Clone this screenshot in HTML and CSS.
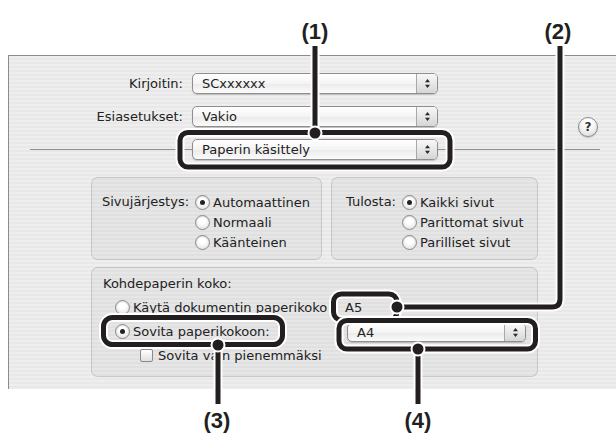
FILE: index.html
```html
<!DOCTYPE html>
<html lang="fi">
<head>
    <meta charset="UTF-8">
    <title>Paperin käsittely</title>
    <link rel="stylesheet" href="styles.css">
</head>
<body>
    <div class="page">
        <div class="dialog">
            <div class="top-rows">
                <span class="row-label">Kirjoitin:</span>
                <div class="popup popup-row">
                    <span class="popup-text">SCxxxxxx</span>
                    <span class="stepper"><svg width="7" height="11" viewBox="0 0 7 11"><path d="M1 4.2 3.5 1 6 4.2Z M1 6.8 3.5 10 6 6.8Z" fill="#2a2a2a"/></svg></span>
                </div>
                <span class="row-label">Esiasetukset:</span>
                <div class="popup popup-row">
                    <span class="popup-text">Vakio</span>
                    <span class="stepper"><svg width="7" height="11" viewBox="0 0 7 11"><path d="M1 4.2 3.5 1 6 4.2Z M1 6.8 3.5 10 6 6.8Z" fill="#2a2a2a"/></svg></span>
                </div>
                <span class="help">?</span>
            </div>

            <div class="divider">
                <div class="popup popup-panel">
                    <span class="popup-text">Paperin käsittely</span>
                    <span class="stepper"><svg width="7" height="11" viewBox="0 0 7 11"><path d="M1 4.2 3.5 1 6 4.2Z M1 6.8 3.5 10 6 6.8Z" fill="#2a2a2a"/></svg></span>
                </div>
            </div>

            <div class="groups">
                <div class="group group-choice group-order">
                    <span class="group-label">Sivujärjestys:</span>
                    <div class="radio-list">
                        <div class="option"><span class="radio on"></span>Automaattinen</div>
                        <div class="option"><span class="radio"></span>Normaali</div>
                        <div class="option"><span class="radio"></span>Käänteinen</div>
                    </div>
                </div>

                <div class="group group-choice group-print">
                    <span class="group-label">Tulosta:</span>
                    <div class="radio-list">
                        <div class="option"><span class="radio on"></span>Kaikki sivut</div>
                        <div class="option"><span class="radio"></span>Parittomat sivut</div>
                        <div class="option"><span class="radio"></span>Parilliset sivut</div>
                    </div>
                </div>

                <div class="group group-size">
                    <span class="size-title">Kohdepaperin koko:</span>
                    <div class="option indent"><span class="radio"></span>Käytä dokumentin paperikoko</div>
                    <span class="value-field">A5</span>
                    <div class="option indent"><span class="radio on"></span>Sovita paperikokoon:</div>
                    <div class="popup popup-small">
                        <span class="popup-text">A4</span>
                        <span class="stepper"><svg width="7" height="11" viewBox="0 0 7 11"><path d="M1 4.2 3.5 1 6 4.2Z M1 6.8 3.5 10 6 6.8Z" fill="#2a2a2a"/></svg></span>
                    </div>
                    <div class="option check-option"><span class="checkbox"></span>Sovita vain pienemmäksi</div>
                </div>
            </div>
        </div>

        <!-- callout lines drawn over the dialog -->
        <svg class="callouts" width="616" height="441" viewBox="0 0 616 441">
            <g fill="none">
                <path d="M315 46V133" stroke="#fff" stroke-width="9"/>
                <rect x="180" y="132.5" width="270" height="34.5" rx="8" stroke="#fff" stroke-width="9"/>
                <rect x="180" y="132.5" width="270" height="34.5" rx="8" stroke="#231f20" stroke-width="5"/>
                <path d="M315 46V133" stroke="#231f20" stroke-width="5"/>
            </g>
            <circle cx="315" cy="133" r="6.5" fill="#231f20" stroke="#fff" stroke-width="2"/>

            <g fill="none">
                <path d="M560 46V299Q560 307 552 307H397" stroke="#fff" stroke-width="9"/>
                <rect x="333.5" y="294" width="63.5" height="26" rx="8" stroke="#fff" stroke-width="9"/>
                <rect x="333.5" y="294" width="63.5" height="26" rx="8" stroke="#231f20" stroke-width="5"/>
                <path d="M560 46V299Q560 307 552 307H397" stroke="#231f20" stroke-width="5"/>
            </g>
            <circle cx="397" cy="307" r="6.5" fill="#231f20" stroke="#fff" stroke-width="2"/>

            <g fill="none">
                <rect x="103.5" y="317.5" width="179" height="27" rx="9" stroke="#fff" stroke-width="9"/>
                <path d="M218 345V404" stroke="#fff" stroke-width="9"/>
                <rect x="103.5" y="317.5" width="179" height="27" rx="9" stroke="#231f20" stroke-width="5"/>
                <path d="M218 345V404" stroke="#231f20" stroke-width="5"/>
            </g>
            <circle cx="218" cy="345" r="6.5" fill="#231f20" stroke="#fff" stroke-width="2"/>

            <g fill="none">
                <rect x="339" y="320.5" width="196.5" height="28.5" rx="8" stroke="#fff" stroke-width="9"/>
                <path d="M418 349V404" stroke="#fff" stroke-width="9"/>
                <rect x="339" y="320.5" width="196.5" height="28.5" rx="8" stroke="#231f20" stroke-width="5"/>
                <path d="M418 349V404" stroke="#231f20" stroke-width="5"/>
            </g>
            <circle cx="418" cy="349" r="6.5" fill="#231f20" stroke="#fff" stroke-width="2"/>
        </svg>

        <span class="callout-num num-1">(1)</span>
        <span class="callout-num num-2">(2)</span>
        <span class="callout-num num-3">(3)</span>
        <span class="callout-num num-4">(4)</span>
    </div>
</body>
</html>
```

FILE: styles.css
```css
* {
    box-sizing: border-box;
}
body {
    margin: 0;
    background: #ffffff;
    font-family: "DejaVu Sans", "Liberation Sans", sans-serif;
    font-size: 13px;
    color: #222;
}
.page {
    position: relative;
    width: 616px;
    height: 441px;
    padding-top: 55px;
    overflow: hidden;
}
.dialog {
    margin-left: 8px;
    height: 334px;
    border-top: 1px solid #8c8c8c;
    border-left: 1px solid #8c8c8c;
    background: repeating-linear-gradient(#eeeeee 0 2px, #e8e8e8 2px 4px);
}
.top-rows {
    display: grid;
    grid-template-columns: 174px 246px 1fr;
    column-gap: 9px;
    row-gap: 12px;
    padding-top: 17px;
    align-items: center;
}
.row-label {
    grid-column: 1;
    text-align: right;
    white-space: nowrap;
}
.popup-row {
    grid-column: 2;
}
.popup {
    display: flex;
    align-items: center;
    height: 21px;
    border: 1px solid #8e8e8e;
    border-radius: 5px;
    background: linear-gradient(#ffffff, #f4f4f4 50%, #eaeaea 51%, #fbfbfb);
    box-shadow: 0 1px 1px rgba(0, 0, 0, 0.18);
    overflow: hidden;
}
.popup-text {
    flex: 1;
    padding-left: 9px;
    white-space: nowrap;
}
.stepper {
    display: flex;
    align-items: center;
    justify-content: center;
    width: 21px;
    height: 100%;
    border-left: 1px solid #a8a8a8;
    background: linear-gradient(#f8f8f8, #d6d6d6);
}
.help {
    grid-column: 3;
    grid-row: 2;
    justify-self: end;
    align-self: start;
    margin: 11px 18px -10px 0;
    width: 20px;
    height: 20px;
    border: 1px solid #8a8a8a;
    border-radius: 50%;
    background: radial-gradient(circle at 50% 30%, #ffffff 20%, #d8d8d8 100%);
    box-shadow: 0 1px 1px rgba(0, 0, 0, 0.2);
    font-size: 12px;
    font-weight: bold;
    line-height: 18px;
    text-align: center;
    color: #333;
}
.divider {
    margin: 12px 16px 0 21px;
    height: 21px;
    background: linear-gradient(#8e8e8e, #8e8e8e) 0 10px / 100% 1px no-repeat;
}
.popup-panel {
    width: 246px;
    margin-left: 162px;
}
.groups {
    display: grid;
    grid-template-columns: 231px 207px;
    gap: 7px 9px;
    width: 447px;
    margin: 17px 0 0 82px;
}
.group {
    border: 1px solid rgba(0, 0, 0, 0.13);
    border-radius: 7px;
    background: rgba(0, 0, 0, 0.03);
}
.group-choice {
    height: 83px;
    display: grid;
    column-gap: 6px;
    align-content: start;
    padding-top: 14px;
}
.group-order {
    grid-template-columns: 87px auto;
    padding-left: 10px;
}
.group-print {
    grid-template-columns: 53px auto;
    padding-left: 11px;
}
.group-label {
    text-align: right;
    line-height: 20px;
    white-space: nowrap;
}
.radio-list {
    display: flex;
    flex-direction: column;
}
.option {
    display: flex;
    align-items: center;
    gap: 3px;
    height: 20px;
    white-space: nowrap;
}
.radio {
    display: flex;
    align-items: center;
    justify-content: center;
    flex: none;
    width: 15px;
    height: 15px;
    border: 1px solid #8a8a8a;
    border-radius: 50%;
    background: radial-gradient(circle at 50% 35%, #ffffff 30%, #d9d9d9 100%);
    box-shadow: inset 0 1px 1px rgba(0, 0, 0, 0.12);
}
.radio.on::after {
    content: "";
    width: 5px;
    height: 5px;
    border-radius: 50%;
    background: #222;
}
.checkbox {
    flex: none;
    width: 13px;
    height: 13px;
    margin-right: 2px;
    border: 1px solid #8a8a8a;
    border-radius: 2px;
    background: linear-gradient(#ffffff, #e0e0e0);
}
.group-size {
    grid-column: 1 / span 2;
    height: 110px;
    display: grid;
    grid-template-columns: 237px 1fr;
    grid-template-rows: repeat(4, 20px);
    row-gap: 4px;
    align-items: center;
    padding: 5px 0 0 11px;
}
.size-title {
    grid-column: 1 / span 2;
}
.indent {
    padding-left: 12px;
}
.check-option {
    grid-column: 1 / span 2;
    padding-left: 37px;
}
.value-field {
    padding-left: 5px;
}
.popup-small {
    width: 179px;
    height: 19px;
    margin: 3px 0 0 7px;
}
.callouts {
    position: absolute;
    left: 0;
    top: 0;
}
.callout-num {
    position: absolute;
    top: 19px;
    width: 40px;
    font-family: "Liberation Sans", Arial, sans-serif;
    font-weight: bold;
    font-size: 22px;
    line-height: 26px;
    text-align: center;
    color: #231f20;
}
.num-1 { left: 295px; }
.num-2 { left: 538px; }
.num-3 { left: 197px; top: 408px; }
.num-4 { left: 398px; top: 408px; }
```
